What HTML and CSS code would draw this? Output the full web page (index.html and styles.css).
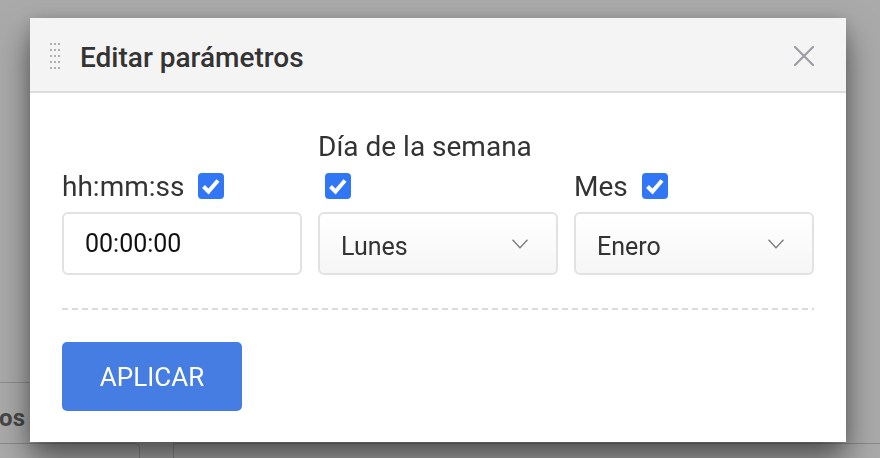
FILE: index.html
```html
<!DOCTYPE html>
<html lang="es">
<head>
<meta charset="utf-8">
<title>Editar parámetros</title>
<link rel="stylesheet" href="styles.css">
</head>
<body>
<div class="page">
  <div class="page-row">
    <div class="cell-clip"><span class="cell-text">Eventos</span></div>
  </div>
  <div class="page-foot">
    <div class="foot-box"></div>
    <div class="foot-box2"></div>
  </div>
</div>

<div class="modal">
  <div class="modal-header">
    <svg class="handle" width="10" height="26" viewBox="0 0 10 26">
      <g fill="#b0b0b0">
        <rect x="0" y="0" width="2" height="2"/><rect x="4" y="0" width="2" height="2"/><rect x="8" y="0" width="2" height="2"/>
        <rect x="0" y="6" width="2" height="2"/><rect x="4" y="6" width="2" height="2"/><rect x="8" y="6" width="2" height="2"/>
        <rect x="0" y="12" width="2" height="2"/><rect x="4" y="12" width="2" height="2"/><rect x="8" y="12" width="2" height="2"/>
        <rect x="0" y="18" width="2" height="2"/><rect x="4" y="18" width="2" height="2"/><rect x="8" y="18" width="2" height="2"/>
        <rect x="0" y="24" width="2" height="2"/><rect x="4" y="24" width="2" height="2"/><rect x="8" y="24" width="2" height="2"/>
      </g>
    </svg>
    <h2 class="title">Editar parámetros</h2>
    <svg class="close" width="20" height="20" viewBox="0 0 20 20">
      <path d="M1 1 L19 19 M19 1 L1 19" stroke="#9b9ea3" stroke-width="2.2" stroke-linecap="round" fill="none"/>
    </svg>
  </div>
  <div class="modal-body">
    <div class="fields">
      <div class="field">
        <label class="label">hh:mm:ss <span class="check"><svg width="26" height="26" viewBox="0 0 26 26"><rect width="26" height="26" rx="4" fill="#3177f5"/><polyline points="5.5,13.5 10.5,18.5 20,7.5" fill="none" stroke="#fff" stroke-width="4"/></svg></span></label>
        <div class="input">00:00:00</div>
      </div>
      <div class="field">
        <label class="label">Día de la semana <span class="check"><svg width="26" height="26" viewBox="0 0 26 26"><rect width="26" height="26" rx="4" fill="#3177f5"/><polyline points="5.5,13.5 10.5,18.5 20,7.5" fill="none" stroke="#fff" stroke-width="4"/></svg></span></label>
        <div class="select"><span>Lunes</span><svg class="chev" width="16" height="10" viewBox="0 0 16 10"><polyline points="0.5,0.8 8,8.8 15.5,0.8" fill="none" stroke="#7a7a7a" stroke-width="1.3"/></svg></div>
      </div>
      <div class="field">
        <label class="label">Mes <span class="check"><svg width="26" height="26" viewBox="0 0 26 26"><rect width="26" height="26" rx="4" fill="#3177f5"/><polyline points="5.5,13.5 10.5,18.5 20,7.5" fill="none" stroke="#fff" stroke-width="4"/></svg></span></label>
        <div class="select"><span>Enero</span><svg class="chev" width="16" height="10" viewBox="0 0 16 10"><polyline points="0.5,0.8 8,8.8 15.5,0.8" fill="none" stroke="#7a7a7a" stroke-width="1.3"/></svg></div>
      </div>
    </div>
    <div class="sep"></div>
    <button class="btn">APLICAR</button>
  </div>
</div>
</body>
</html>
```

FILE: styles.css
```css
html, body {
  margin: 0;
  padding: 0;
}
body {
  background: #aaaaaa;
  width: 880px;
  height: 458px;
  overflow: hidden;
  font-family: Roboto, "Liberation Sans", sans-serif;
}
.page {
  padding-top: 382px;
}
.page-row {
  border-top: 1px solid #8e8e8e;
  width: 200px;
  height: 60px;
}
.cell-clip {
  width: 25px;
  height: 60px;
  box-sizing: border-box;
  overflow: hidden;
  display: flex;
  justify-content: flex-end;
  align-items: flex-start;
  padding-top: 21px;
}
.cell-text {
  font-size: 24px;
  font-weight: 700;
  color: #474747;
  white-space: nowrap;
}
.page-foot {
  display: flex;
  height: 20px;
}
.foot-box {
  width: 139px;
  border-top: 1px solid #8a8a8a;
  border-right: 1px solid #8a8a8a;
  border-top-right-radius: 5px;
}
.foot-box2 {
  flex: 1;
  margin-left: 33px;
  border-top: 1px solid #8a8a8a;
  border-left: 1px solid #8a8a8a;
}
.modal {
  position: fixed;
  left: 30px;
  top: 18px;
  width: 816px;
  background: #ffffff;
  box-shadow: 0 18px 30px rgba(0, 0, 0, 0.5), 0 0 14px rgba(0, 0, 0, 0.12);
}
.modal-header {
  height: 73px;
  background: #f4f4f4;
  border-bottom: 2px solid #dddddd;
  display: flex;
  align-items: center;
  padding: 0 32px 0 20px;
}
.handle {
  margin-top: 3px;
  flex: none;
}
.title {
  margin: 6px 0 0 20px;
  font-size: 28px;
  font-weight: 500;
  color: #333333;
  flex: 1;
}
.close {
  margin-top: 3px;
  flex: none;
}
.modal-body {
  padding: 34px 32px 31px;
}
.fields {
  display: grid;
  grid-template-columns: repeat(3, 240px);
  column-gap: 16px;
  align-items: end;
}
.label {
  display: block;
  font-size: 28px;
  line-height: 40px;
  color: #333333;
  margin-bottom: 5px;
}
.check {
  display: inline-block;
  width: 26px;
  height: 26px;
  margin-left: 7px;
  vertical-align: -3px;
}
.check svg {
  display: block;
}
.input, .select {
  box-sizing: border-box;
  height: 63px;
  border: 2px solid #e2e2e2;
  border-radius: 6px;
  display: flex;
  align-items: center;
  padding: 0 28px 0 21px;
  font-size: 25px;
}
.input {
  color: #111111;
  background: #ffffff;
}
.select {
  color: #333333;
  background: linear-gradient(#ffffff, #f6f6f6);
  justify-content: space-between;
  padding-top: 5px;
}
.chev {
  display: block;
  margin-top: -5px;
}
.sep {
  margin-top: 33px;
  height: 2px;
  background: repeating-linear-gradient(90deg, #dadada 0 6px, transparent 6px 10px);
}
.btn {
  display: block;
  margin-top: 32px;
  width: 180px;
  height: 69px;
  border: none;
  border-radius: 5px;
  background: #467de2;
  color: #ffffff;
  font-family: Roboto, "Liberation Sans", sans-serif;
  font-size: 26px;
  font-weight: 400;
  padding: 0;
}
```
